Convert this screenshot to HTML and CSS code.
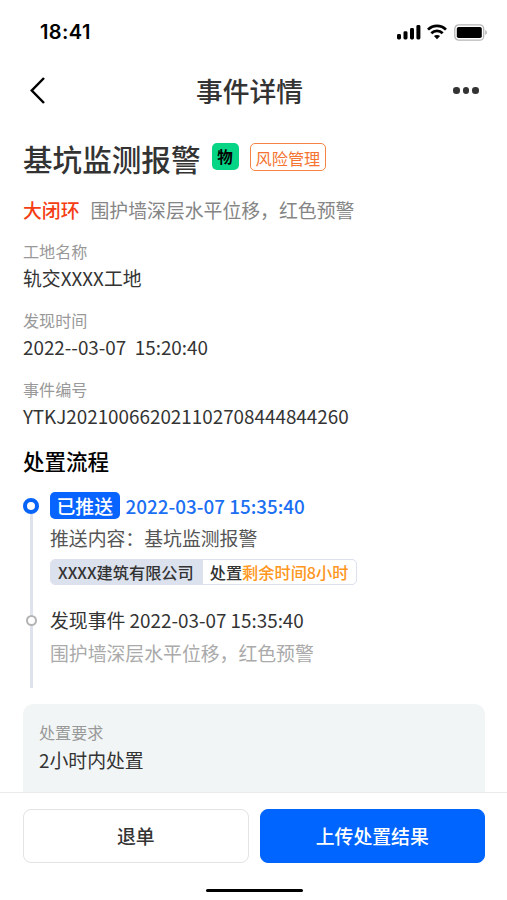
FILE: index.html
```
<!DOCTYPE html>
<html lang="zh-CN">
<head>
    <meta charset="UTF-8">
    <meta name="viewport" content="width=device-width, initial-scale=1.0">
    <title>事件详情</title>
    <link rel="stylesheet" href="styles.css">
</head>
<body>
    <div class="page">
        <div class="status-bar">
            <span class="time">18:41</span>
            <div class="status-icons">
                <svg class="signal" width="24" height="16" viewBox="0 0 24 16">
                    <rect x="0" y="10" width="4" height="5.5" rx="1.4"/>
                    <rect x="6.5" y="7.3" width="4" height="8.2" rx="1.4"/>
                    <rect x="13" y="4" width="4" height="11.5" rx="1.4"/>
                    <rect x="19.4" y="1" width="4" height="14.5" rx="1.4"/>
                </svg>
                <svg class="wifi" width="20" height="16" viewBox="0 0 20 16">
                    <path d="M1 5.6C6 .6 14 .6 19 5.6M4.3 9.2c3.2-3.1 8.2-3.1 11.4 0" fill="none" stroke="#000" stroke-width="2.7"/>
                    <path d="M6.9 12.1c1.8-1.5 4.4-1.5 6.2 0L10 15.2z"/>
                </svg>
                <svg class="battery" width="34" height="17" viewBox="0 0 34 17">
                    <rect x=".8" y=".8" width="28.9" height="15.4" rx="4" fill="none" stroke="#b5b5b5" stroke-width="1.3"/>
                    <rect x="2.8" y="3" width="25" height="11" rx="1.8"/>
                    <path d="M31.3 6v5c2-.8 2-4.2 0-5z" fill="#aaa"/>
                </svg>
            </div>
        </div>

        <header class="nav">
            <svg class="back" width="16" height="28" viewBox="0 0 16 28">
                <path d="M14 1L1.800 13.500 14 26" fill="none" stroke="#000" stroke-width="2.500"/>
            </svg>
            <h1 class="nav-title">事件详情</h1>
            <div class="more"><i></i><i></i><i></i></div>
        </header>

        <main class="content">
            <div class="title-row">
                <h2 class="title">基坑监测报警</h2>
                <span class="badge">物</span>
                <span class="tag">风险管理</span>
            </div>
            <p class="summary"><b class="loop">大闭环</b>围护墙深层水平位移，红色预警</p>

            <dl class="info">
                <dt>工地名称</dt>
                <dd>轨交XXXX工地</dd>
                <dt>发现时间</dt>
                <dd>2022--03-07&nbsp; 15:20:40</dd>
                <dt>事件编号</dt>
                <dd>YTKJ202100662021102708444844260</dd>
            </dl>

            <h3 class="section-title">处置流程</h3>
            <div class="timeline">
                <div class="step">
                    <div class="rail"><span class="dot active"></span></div>
                    <div class="step-body">
                        <div class="step-head"><span class="state">已推送</span><span class="date">2022-03-07 15:35:40</span></div>
                        <p class="push">推送内容：基坑监测报警</p>
                        <div class="company">
                            <span class="company-name">XXXX建筑有限公司</span>
                            <span class="remain">处置<em>剩余时间8小时</em></span>
                        </div>
                    </div>
                </div>
                <div class="step last">
                    <div class="rail"><span class="dot"></span></div>
                    <div class="step-body">
                        <p class="found">发现事件 2022-03-07 15:35:40</p>
                        <p class="found-desc">围护墙深层水平位移，红色预警</p>
                    </div>
                </div>
            </div>

            <div class="card">
                <p class="card-label">处置要求</p>
                <p class="card-value">2小时内处置</p>
            </div>
        </main>

        <footer class="footer">
            <div class="buttons">
                <button class="btn">退单</button>
                <button class="btn primary">上传处置结果</button>
            </div>
            <div class="home-bar"></div>
        </footer>
    </div>
</body>
</html>
```

FILE: styles.css
```
* {
    box-sizing: border-box;
    margin: 0;
    padding: 0;
}
body {
    font-family: "Noto Sans CJK SC", sans-serif;
    font-size: 18.85px;
    line-height: 28px;
    color: #333;
    background: #fff;
}
.page {
    height: 900px;
    display: flex;
    flex-direction: column;
    overflow: hidden;
}

/* status bar */
.status-bar {
    height: 62px;
    flex: none;
    padding: 2px 19px 0 40px;
    display: flex;
    align-items: center;
    justify-content: space-between;
}
.time {
    font-family: Inter, sans-serif;
    font-size: 20px;
    font-weight: 600;
    letter-spacing: 0.4px;
    color: #000;
}
.status-icons {
    display: flex;
    align-items: center;
}
.wifi {
    margin: 0 7px 0 6px;
}

/* nav */
.nav {
    height: 57px;
    flex: none;
    padding: 0 28px 0 30px;
    display: grid;
    grid-template-columns: 56px 1fr 66px;
    align-items: center;
}
.nav-title {
    padding-top: 1px;
    font-size: 26.8px;
    font-weight: 500;
    line-height: 40px;
    text-align: center;
}
.more {
    display: flex;
    gap: 3px;
    justify-content: flex-end;
}
.more i {
    width: 6.6px;
    height: 6.6px;
    border-radius: 50%;
    background: #333;
}

/* detail */
.content {
    flex: 1;
    min-height: 0;
    padding: 18px 22px 0 23px;
    display: flex;
    flex-direction: column;
    overflow: hidden;
}
.content > * {
    flex: none;
}
.title-row {
    height: 41px;
    display: flex;
    align-items: center;
}
.title {
    padding-top: 2px;
    font-size: 29.6px;
    font-weight: 500;
    line-height: 40px;
}
.badge {
    width: 27px;
    height: 27px;
    margin: 0 11px 0 11px;
    border-radius: 5px;
    background: #07d586;
    color: #000;
    font-size: 15.5px;
    font-weight: 700;
    line-height: 27px;
    text-align: center;
}
.tag {
    height: 28px;
    padding: 0 5px;
    border: 1.5px solid #f58345;
    border-radius: 5px;
    color: #f57431;
    font-size: 16.2px;
    line-height: 28px;
}
.title-row .badge,
.title-row .tag {
    margin-bottom: 2px;
}
.summary {
    margin-top: 18px;
    color: #858585;
}
.loop {
    margin-right: 11px;
    color: #f53d13;
    font-weight: 500;
}
.info {
    margin-top: 14px;
}
.info dt {
    color: #999;
    font-size: 16.1px;
    line-height: 26px;
}
.info dd {
    height: 43px;
}
.section-title {
    color: #000;
    font-size: 21.5px;
    font-weight: 500;
    line-height: 32px;
}

/* timeline */
.timeline {
    margin-top: 13px;
}
.step {
    display: flex;
    gap: 11px;
    height: 125px;
}
.step.last {
    height: 73px;
}
.rail {
    width: 16px;
    display: flex;
    flex-direction: column;
    align-items: center;
}
.rail::after {
    content: "";
    flex: 1;
    width: 3px;
    background: #dde2ec;
}
.dot {
    width: 11px;
    height: 11px;
    border: 2.5px solid #b3b3b3;
    border-radius: 50%;
}
.dot.active {
    width: 16px;
    height: 16px;
    margin-top: 8px;
    border: 4px solid #0764f8;
}
.step-head {
    display: flex;
    align-items: center;
    gap: 6px;
    height: 31px;
    color: #1b6ff2;
}
.date {
    font-weight: 500;
}
.state {
    height: 27px;
    padding: 0 6.5px;
    border-radius: 5px;
    background: #0764ff;
    color: #fff;
    font-weight: 500;
    line-height: 27px;
}
.push {
    margin-top: 3px;
    color: #555;
}
.company {
    display: inline-flex;
    height: 26px;
    margin-top: 7px;
    border: 1px solid #dce1ee;
    border-radius: 5px;
    font-size: 16.2px;
    font-weight: 500;
    line-height: 25px;
    overflow: hidden;
}
.company-name {
    padding: 0 9px 0 7px;
    background: #dce1ee;
}
.remain {
    padding: 0 8px 0 7px;
}
.remain em {
    color: #ff9620;
    font-style: normal;
}
.last .step-body {
    margin-top: -9px;
}
.found-desc {
    margin-top: 5px;
    color: #aaa;
}

/* requirement card */
.card {
    height: 100px;
    margin-top: 16px;
    padding: 15px 16px;
    border-radius: 10px;
    background: #f2f5f6;
}
.card-label {
    color: #999;
    font-size: 16.1px;
    line-height: 26px;
}
.card-value {
    padding-top: 1px;
}

/* bottom actions */
.footer {
    height: 108px;
    flex: none;
    padding: 16px 22px 0 23px;
    border-top: 1px solid #e8eaeb;
    background: #fff;
}
.buttons {
    display: flex;
    gap: 11px;
}
.btn {
    flex: 1;
    height: 54px;
    border: 1px solid #e3e3e3;
    border-radius: 8px;
    background: #fff;
    color: #333;
    font: inherit;
    font-weight: 500;
}
.btn.primary {
    border-color: #0065ff;
    background: #0065ff;
    color: #fff;
}
.home-bar {
    width: 97px;
    height: 3px;
    margin: 26px auto 0;
    border-radius: 2px;
    background: #000;
}
```
